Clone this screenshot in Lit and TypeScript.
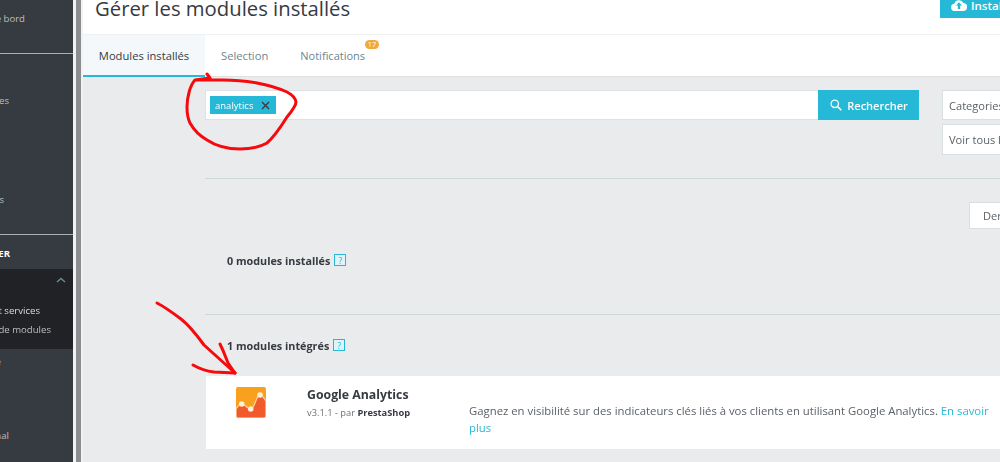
import { LitElement, html, css } from "lit";
import { customElement } from "lit/decorators.js";

const help = html`<span class="help">?</span>`;

@customElement("app-root")
export class AppRoot extends LitElement {
  static styles = css`
    :host { display: block; width: 1000px; height: 462px; overflow: hidden; position: relative; font-family: "Open Sans", sans-serif; background: #eaebed; color: #363a41; }
    * { box-sizing: border-box; }
    .page { display: flex; height: 462px; width: 1000px; overflow: hidden; filter: blur(0.3px); }
    .side { width: 73px; flex: none; background: #363a41; color: #bebebe; font-size: 9.6px; display: flex; flex-direction: column; }
    .gutter { width: 10px; flex: none; display: flex; background: #f1f2f3; padding: 0 2px 0 3px; }
    .gutter i { flex: 1; background: #8b8d8f; }
    .row { display: flex; justify-content: flex-end; white-space: nowrap; overflow: hidden; height: 16px; line-height: 18px; }
    .r1 { margin-top: 10px; padding-right: 48px; }
    .line { height: 1px; background: #a9b1b5; flex: none; }
    .l1 { margin-top: 27px; }
    .r2 { margin-top: 38px; padding-right: 64px; }
    .r3 { margin-top: 83px; padding-right: 69px; }
    .l2 { margin-top: 27px; }
    .r4 { margin-top: 10px; padding-right: 63px; font-weight: 700; color: #fff; }
    .dark { margin-top: 8px; height: 80px; background: #202226; flex: none; display: flex; flex-direction: column; position: relative; }
    .chev { align-self: flex-end; margin: 8px 7px 0 0; width: 10px; height: 6px; display: block; }
    .r5 { margin-top: 19px; padding-right: 33px; color: #dcdcdc; }
    .r6 { margin-top: 3px; padding-right: 22px; }
    .r7 { margin-top: 4px; padding-right: 72px; }
    .r8 { margin-top: 58px; padding-right: 64px; }
    .main { flex: none; width: 917px; display: flex; flex-direction: column; }
    .head { height: 35px; background: #fff; flex: none; border-bottom: 1px solid #eef0f1; display: flex; justify-content: space-between; align-items: flex-start; overflow: hidden; padding-left: 12px; }
    h1 { margin: -6px 0 0; font-weight: 400; font-size: 20.3px; line-height: 28px; white-space: nowrap; }
    .install { display: flex; align-items: center; gap: 4px; width: 60px; flex: none; height: 18px; background: #25b9d7; color: #fff; padding: 0 0 8px 11px; font-size: 11.5px; font-weight: 600; white-space: nowrap; overflow: hidden; }
    .install svg { flex: none; }
    .tabs { height: 42px; flex: none; background: #fff; border-bottom: 1px solid #dfe1e3; display: flex; font-size: 11.2px; color: #6c868e; }
    .tab { display: flex; align-items: center; padding: 0 16px; position: relative; }
    .tab.on { background: #f4f8fb; color: #363a41; width: 122px; justify-content: center; padding: 0; border-bottom: 2px solid #25b9d7; margin-bottom: -1px; }
    .notif { position: relative; font-size: 11px; }
    .badge { position: absolute; right: -14px; top: -8px; width: 14px; height: 9px; border-radius: 5px; background: #f2a93b; color: #fff; font-size: 7.5px; line-height: 9px; text-align: center; }
    .content { flex: 1; padding: 13px 0 0 122px; overflow: hidden; }
    .top { display: flex; gap: 23px; width: 900px; }
    .search { width: 714px; flex: none; height: 30px; display: flex; background: #fff; }
    .box { flex: 1; border: 1px solid #dde2e5; border-right: 0; padding: 0 4px; display: flex; align-items: center; }
    .tag { display: flex; align-items: center; width: 66px; height: 18px; background: #25b9d7; color: #fff; font-size: 9.5px; padding-left: 5px; gap: 8px; }
    .tag svg { flex: none; }
    .btn { width: 101px; flex: none; background: #25b9d7; color: #fff; font-size: 11px; font-weight: 600; display: flex; align-items: center; justify-content: center; gap: 5px; padding-left: 1px; }
    .filters { width: 100px; display: flex; flex-direction: column; gap: 4px; flex: none; }
    .sel { height: 30px; width: 100px; background: #fff; border: 1px solid #d8dfe2; border-right: 0; font-size: 11.1px; color: #5a6268; padding-left: 6px; display: flex; align-items: center; white-space: nowrap; overflow: hidden; }
    .sel + .sel { height: 31px; }
    .rule { height: 1px; background: #cfd6da; }
    .r-a { margin-top: 23px; }
    .sort { display: flex; justify-content: flex-end; margin-top: 23px; height: 27px; }
    .sortb { width: 31px; height: 27px; background: #fff; border: 1px solid #d8dfe2; border-right: 0; font-size: 11.1px; color: #5a6268; padding-left: 13px; display: flex; align-items: center; white-space: nowrap; overflow: hidden; }
    .count { font-size: 10.8px; font-weight: 700; padding-left: 22px; display: flex; align-items: center; gap: 4px; height: 16px; }
    .c-a { margin-top: 23px; }
    .r-b { margin-top: 46px; }
    .c-b { margin-top: 22px; }
    .help { width: 12px; height: 12px; border: 1.5px solid #25b9d7; background: #dff3f8; color: #25b9d7; font-size: 9px; font-weight: 400; display: flex; align-items: center; justify-content: center; line-height: 1; }
    .card { margin: 23px 0 0 1px; height: 73px; background: #fff; display: flex; }
    .logo { flex: none; margin: 11px 0 0 30px; width: 30px; height: 31px; display: block; }
    .meta { margin: 11px 0 0 41px; width: 162px; flex: none; }
    .title { font-size: 12.3px; font-weight: 700; line-height: 16px; }
    .ver { font-size: 9.3px; line-height: 13px; margin-top: 3px; color: #6b7177; white-space: nowrap; }
    .ver b { color: #363a41; }
    .desc { margin-top: 26px; width: 525px; flex: none; font-size: 11.33px; line-height: 17px; color: #5b6167; }
    .desc span { color: #25b9d7; }
    .ink { position: absolute; left: 0; top: 0; width: 1000px; height: 462px; pointer-events: none; }
    .ink path { fill: none; stroke: #f60a0c; stroke-width: 3; stroke-linecap: round; stroke-linejoin: round; }
  `;

  render() {
    return html`
      <div class="page">
        <nav class="side">
          <div class="row r1">Tableau de bord</div>
          <div class="line l1"></div>
          <div class="row r2">Commandes</div>
          <div class="row r3">Clients &amp; Modules</div>
          <div class="line l2"></div>
          <div class="row r4">AMÉLIORER</div>
          <div class="dark">
            <svg class="chev" viewBox="0 0 10 6"><path d="M1 5 5 1.5 9 5" fill="none" stroke="#6c868e" stroke-width="1.6"/></svg>
            <div class="row r5">Modules et services</div>
            <div class="row r6">Catalogue de modules</div>
          </div>
          <div class="row r7">Apparence</div>
          <div class="row r8">International</div>
        </nav>
        <div class="gutter"><i></i></div>
        <main class="main">
          <header class="head">
            <h1>Gérer les modules installés</h1>
            <div class="install">
              <svg width="16" height="12" viewBox="0 0 16 12"><path fill="#fff" d="M4 12a3.6 3.6 0 0 1-.6-7.2A4.8 4.8 0 0 1 12.4 4 4 4 0 0 1 12 12Z"/><path fill="#25b9d7" d="M8 3.2 11 6.6H9.2V10H6.8V6.6H5Z"/></svg>
              <span>Installer un module</span>
            </div>
          </header>
          <div class="tabs">
            <div class="tab on">Modules installés</div>
            <div class="tab">Selection</div>
            <div class="tab"><span class="notif">Notifications<span class="badge">17</span></span></div>
          </div>
          <section class="content">
            <div class="top">
              <div class="search">
                <div class="box"><span class="tag">analytics
                  <svg width="9" height="9" viewBox="0 0 9 9"><path d="M1 1 8 8M8 1 1 8" stroke="#363a41" stroke-width="1.3"/></svg></span></div>
                <div class="btn">
                  <svg width="12" height="12" viewBox="0 0 12 12"><circle cx="4.800" cy="4.800" r="3.700" fill="none" stroke="#fff" stroke-width="1.3"/><path d="M7.600 7.600 11.300 11.300" stroke="#fff" stroke-width="1.5"/></svg>
                  Rechercher
                </div>
              </div>
              <div class="filters">
                <div class="sel">Categories</div>
                <div class="sel">Voir tous les modules</div>
              </div>
            </div>
            <div class="rule r-a"></div>
            <div class="sort"><div class="sortb">Dernière activité</div></div>
            <div class="count c-a">0 modules installés ${help}</div>
            <div class="rule r-b"></div>
            <div class="count c-b">1 modules intégrés ${help}</div>
            <article class="card">
              <svg class="logo" viewBox="0 0 30 31">
                <rect width="30" height="31" rx="2" fill="#f9a11f"/>
                <path d="M0 22C2 19 4 17 5.700 17 9 17 11 22 14.700 22 19 22 20 8 24 8 26 8 28 11 30 14V29a2 2 0 0 1-2 2H2a2 2 0 0 1-2-2Z" fill="#f15a2b" stroke="#fcd9a8" stroke-width="1.2"/>
                <circle cx="5.700" cy="17" r="2.800" fill="#fdeedb"/><circle cx="14.700" cy="22" r="2.800" fill="#fdeedb"/><circle cx="24" cy="8" r="2.800" fill="#fdeedb"/>
              </svg>
              <div class="meta">
                <div class="title">Google Analytics</div>
                <div class="ver">v3.1.1 - par <b>PrestaShop</b></div>
              </div>
              <div class="desc">Gagnez en visibilité sur des indicateurs clés liés à vos clients en utilisant Google Analytics. <span>En savoir plus</span></div>
            </article>
          </section>
        </main>
      </div>
      <svg class="ink" viewBox="0 0 1000 462">
        <path d="M207 74 210 78 195 80C190 85 187 98 187 107 187 115 188 119 190 123 195 132 200 136 207 140 216 146 228 149 240 149 250 149 260 147 267 143 275 136 282 125 287 117 292 111 296 106 296 102 295 97 291 94 287 92 278 88 268 85 257 83 245 81 235 80 223 80L195 80"/>
        <path d="M157 303C165 307 173 313 181 319 190 326 196 334 204 345L235 373"/>
        <path d="M193 365C200 369 206 371 214 372L235 373"/>
        <path d="M220 344C224 352 226 358 228 363L235 373"/>
      </svg>
    `;
  }
}
